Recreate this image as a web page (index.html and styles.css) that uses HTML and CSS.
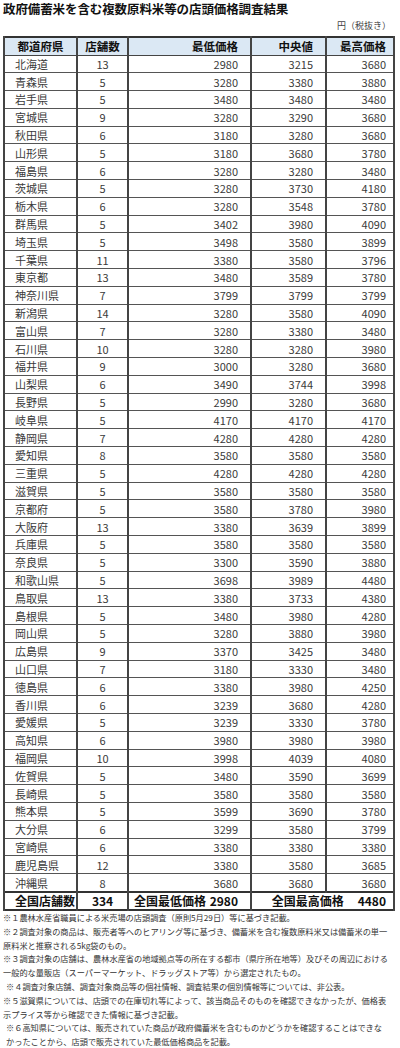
FILE: index.html
```html
<!DOCTYPE html>
<html lang="ja">
<head>
<meta charset="utf-8">
<link rel="stylesheet" href="styles.css">
</head>
<body>
<div class="page">
  <h1 class="title">政府備蓄米を含む複数原料米等の店頭価格調査結果</h1>
  <div class="unit">円（税抜き）</div>
  <table class="prices">
    <colgroup>
      <col class="c1"><col class="c2"><col class="c3"><col class="c4"><col class="c5">
    </colgroup>
    <thead>
      <tr><th class="ctr">都道府県</th><th class="ctr">店舗数</th><th class="num">最低価格</th><th class="num">中央値</th><th class="num">最高価格</th></tr>
    </thead>
    <tbody>
      <tr><td class="pref">北海道</td><td class="ctr">13</td><td class="num">2980</td><td class="num">3215</td><td class="num">3680</td></tr>
      <tr><td class="pref">青森県</td><td class="ctr">5</td><td class="num">3280</td><td class="num">3380</td><td class="num">3880</td></tr>
      <tr><td class="pref">岩手県</td><td class="ctr">5</td><td class="num">3480</td><td class="num">3480</td><td class="num">3480</td></tr>
      <tr><td class="pref">宮城県</td><td class="ctr">9</td><td class="num">3280</td><td class="num">3290</td><td class="num">3680</td></tr>
      <tr><td class="pref">秋田県</td><td class="ctr">6</td><td class="num">3180</td><td class="num">3280</td><td class="num">3680</td></tr>
      <tr><td class="pref">山形県</td><td class="ctr">5</td><td class="num">3180</td><td class="num">3680</td><td class="num">3780</td></tr>
      <tr><td class="pref">福島県</td><td class="ctr">6</td><td class="num">3280</td><td class="num">3280</td><td class="num">3480</td></tr>
      <tr><td class="pref">茨城県</td><td class="ctr">5</td><td class="num">3280</td><td class="num">3730</td><td class="num">4180</td></tr>
      <tr><td class="pref">栃木県</td><td class="ctr">6</td><td class="num">3280</td><td class="num">3548</td><td class="num">3780</td></tr>
      <tr><td class="pref">群馬県</td><td class="ctr">5</td><td class="num">3402</td><td class="num">3980</td><td class="num">4090</td></tr>
      <tr><td class="pref">埼玉県</td><td class="ctr">5</td><td class="num">3498</td><td class="num">3580</td><td class="num">3899</td></tr>
      <tr><td class="pref">千葉県</td><td class="ctr">11</td><td class="num">3380</td><td class="num">3580</td><td class="num">3796</td></tr>
      <tr><td class="pref">東京都</td><td class="ctr">13</td><td class="num">3480</td><td class="num">3589</td><td class="num">3780</td></tr>
      <tr><td class="pref">神奈川県</td><td class="ctr">7</td><td class="num">3799</td><td class="num">3799</td><td class="num">3799</td></tr>
      <tr><td class="pref">新潟県</td><td class="ctr">14</td><td class="num">3280</td><td class="num">3580</td><td class="num">4090</td></tr>
      <tr><td class="pref">富山県</td><td class="ctr">7</td><td class="num">3280</td><td class="num">3380</td><td class="num">3480</td></tr>
      <tr><td class="pref">石川県</td><td class="ctr">10</td><td class="num">3280</td><td class="num">3280</td><td class="num">3980</td></tr>
      <tr><td class="pref">福井県</td><td class="ctr">9</td><td class="num">3000</td><td class="num">3280</td><td class="num">3680</td></tr>
      <tr><td class="pref">山梨県</td><td class="ctr">6</td><td class="num">3490</td><td class="num">3744</td><td class="num">3998</td></tr>
      <tr><td class="pref">長野県</td><td class="ctr">5</td><td class="num">2990</td><td class="num">3280</td><td class="num">3680</td></tr>
      <tr><td class="pref">岐阜県</td><td class="ctr">5</td><td class="num">4170</td><td class="num">4170</td><td class="num">4170</td></tr>
      <tr><td class="pref">静岡県</td><td class="ctr">7</td><td class="num">4280</td><td class="num">4280</td><td class="num">4280</td></tr>
      <tr><td class="pref">愛知県</td><td class="ctr">8</td><td class="num">3580</td><td class="num">3580</td><td class="num">3580</td></tr>
      <tr><td class="pref">三重県</td><td class="ctr">5</td><td class="num">4280</td><td class="num">4280</td><td class="num">4280</td></tr>
      <tr><td class="pref">滋賀県</td><td class="ctr">5</td><td class="num">3580</td><td class="num">3580</td><td class="num">3580</td></tr>
      <tr><td class="pref">京都府</td><td class="ctr">5</td><td class="num">3580</td><td class="num">3780</td><td class="num">3980</td></tr>
      <tr><td class="pref">大阪府</td><td class="ctr">13</td><td class="num">3380</td><td class="num">3639</td><td class="num">3899</td></tr>
      <tr><td class="pref">兵庫県</td><td class="ctr">5</td><td class="num">3580</td><td class="num">3580</td><td class="num">3580</td></tr>
      <tr><td class="pref">奈良県</td><td class="ctr">5</td><td class="num">3300</td><td class="num">3590</td><td class="num">3880</td></tr>
      <tr><td class="pref">和歌山県</td><td class="ctr">5</td><td class="num">3698</td><td class="num">3989</td><td class="num">4480</td></tr>
      <tr><td class="pref">鳥取県</td><td class="ctr">13</td><td class="num">3380</td><td class="num">3733</td><td class="num">4380</td></tr>
      <tr><td class="pref">島根県</td><td class="ctr">5</td><td class="num">3480</td><td class="num">3980</td><td class="num">4280</td></tr>
      <tr><td class="pref">岡山県</td><td class="ctr">5</td><td class="num">3280</td><td class="num">3880</td><td class="num">3980</td></tr>
      <tr><td class="pref">広島県</td><td class="ctr">9</td><td class="num">3370</td><td class="num">3425</td><td class="num">3480</td></tr>
      <tr><td class="pref">山口県</td><td class="ctr">7</td><td class="num">3180</td><td class="num">3330</td><td class="num">3480</td></tr>
      <tr><td class="pref">徳島県</td><td class="ctr">6</td><td class="num">3380</td><td class="num">3980</td><td class="num">4250</td></tr>
      <tr><td class="pref">香川県</td><td class="ctr">6</td><td class="num">3239</td><td class="num">3680</td><td class="num">4280</td></tr>
      <tr><td class="pref">愛媛県</td><td class="ctr">5</td><td class="num">3239</td><td class="num">3330</td><td class="num">3780</td></tr>
      <tr><td class="pref">高知県</td><td class="ctr">6</td><td class="num">3980</td><td class="num">3980</td><td class="num">3980</td></tr>
      <tr><td class="pref">福岡県</td><td class="ctr">10</td><td class="num">3998</td><td class="num">4039</td><td class="num">4080</td></tr>
      <tr><td class="pref">佐賀県</td><td class="ctr">5</td><td class="num">3480</td><td class="num">3590</td><td class="num">3699</td></tr>
      <tr><td class="pref">長崎県</td><td class="ctr">5</td><td class="num">3580</td><td class="num">3580</td><td class="num">3580</td></tr>
      <tr><td class="pref">熊本県</td><td class="ctr">5</td><td class="num">3599</td><td class="num">3690</td><td class="num">3780</td></tr>
      <tr><td class="pref">大分県</td><td class="ctr">6</td><td class="num">3299</td><td class="num">3580</td><td class="num">3799</td></tr>
      <tr><td class="pref">宮崎県</td><td class="ctr">6</td><td class="num">3380</td><td class="num">3380</td><td class="num">3380</td></tr>
      <tr><td class="pref">鹿児島県</td><td class="ctr">12</td><td class="num">3380</td><td class="num">3580</td><td class="num">3685</td></tr>
      <tr><td class="pref">沖縄県</td><td class="ctr">8</td><td class="num">3680</td><td class="num">3680</td><td class="num">3680</td></tr>
    </tbody>
    <tfoot>
      <tr>
        <td class="tot-label">全国店舗数</td>
        <td class="ctr">334</td>
        <td><div class="split"><span>全国最低価格</span><span>2980</span></div></td>
        <td colspan="2"><div class="split wide"><span>全国最高価格</span><span>4480</span></div></td>
      </tr>
    </tfoot>
  </table>
  <div class="notes">
    <p>※１農林水産省職員による米売場の店頭調査（原則5月29日）等に基づき記載。</p>
    <p>※２調査対象の商品は、販売者等へのヒアリング等に基づき、備蓄米を含む複数原料米又は備蓄米の単一<br>原料米と推察される5kg袋のもの。</p>
    <p>※３調査対象の店舗は、農林水産省の地域拠点等の所在する都市（県庁所在地等）及びその周辺における<br>一般的な量販店（スーパーマーケット、ドラッグストア等）から選定されたもの。</p>
    <p class="indent">※４調査対象店舗、調査対象商品等の個社情報、調査結果の個別情報等については、非公表。</p>
    <p>※５滋賀県については、店頭での在庫切れ等によって、該当商品そのものを確認できなかったが、価格表<br>示プライス等から確認できた情報に基づき記載。</p>
    <p class="indent">※６高知県については、販売されていた商品が政府備蓄米を含むものかどうかを確認することはできな<br>かったことから、店頭で販売されていた最低価格商品を記載。</p>
  </div>
</div>
</body>
</html>
```

FILE: styles.css
```css
html, body {
  margin: 0;
  padding: 0;
  background: #ffffff;
}

body {
  font-family: "Noto Sans CJK JP", "Noto Sans", sans-serif;
  color: #222;
}

.page {
  width: 400px;
  padding: 1px 0 0 3px;
  box-sizing: border-box;
}

.title {
  margin: 0;
  font-size: 12.5px;
  line-height: 16px;
  font-weight: bold;
  color: #111;
  letter-spacing: -0.1px;
}

.unit {
  width: 390px;
  text-align: right;
  font-size: 9px;
  line-height: 12px;
  margin-top: 3px;
  color: #444;
  padding-right: 2px;
  box-sizing: border-box;
}

.prices {
  margin-top: 4px;
  width: 390px;
  border-collapse: collapse;
  table-layout: fixed;
  border: 2px solid #333;
}

.c1 { width: 73px; }
.c2 { width: 51px; }
.c3 { width: 123px; }
.c4 { width: 75px; }
.c5 { width: 68px; }

.prices th,
.prices td {
  padding: 0;
  height: 16.8px;
  border-top: 1px solid #555;
  border-bottom: 1px solid #555;
  border-left: 2px solid #444;
  border-right: 2px solid #444;
  font-size: 11px;
  line-height: 14px;
  white-space: nowrap;
  overflow: hidden;
}

.prices thead th {
  height: 16.5px;
  background: #dbe8f4;
  font-weight: bold;
  color: #111;
  font-size: 11.5px;
  border-bottom: 1px solid #444;
}

.prices tbody td {
  color: #3a3a3a;
}

.prices .ctr { text-align: center; }
.prices .num { text-align: right; padding-right: 12px; }
.prices td.num:nth-child(5),
.prices th.num:nth-child(5) { padding-right: 7px; }
.prices .pref { text-align: left; padding-left: 10px; }

.prices tfoot td {
  border-top: 2px solid #333;
  font-weight: bold;
  font-size: 12px;
  color: #111;
  height: 16px;
}

.prices tfoot .tot-label {
  text-align: left;
  padding-left: 10px;
}

.split {
  display: flex;
  justify-content: space-between;
  padding: 0 12px 0 5px;
}

.split.wide {
  justify-content: flex-end;
  gap: 14px;
  padding-right: 7px;
}

.notes {
  margin-top: 0;
  font-size: 8.2px;
  line-height: 13.8px;
  color: #333;
  white-space: nowrap;
}

.notes p {
  margin: 0;
}

.notes .indent {
  padding-left: 3px;
}
```
